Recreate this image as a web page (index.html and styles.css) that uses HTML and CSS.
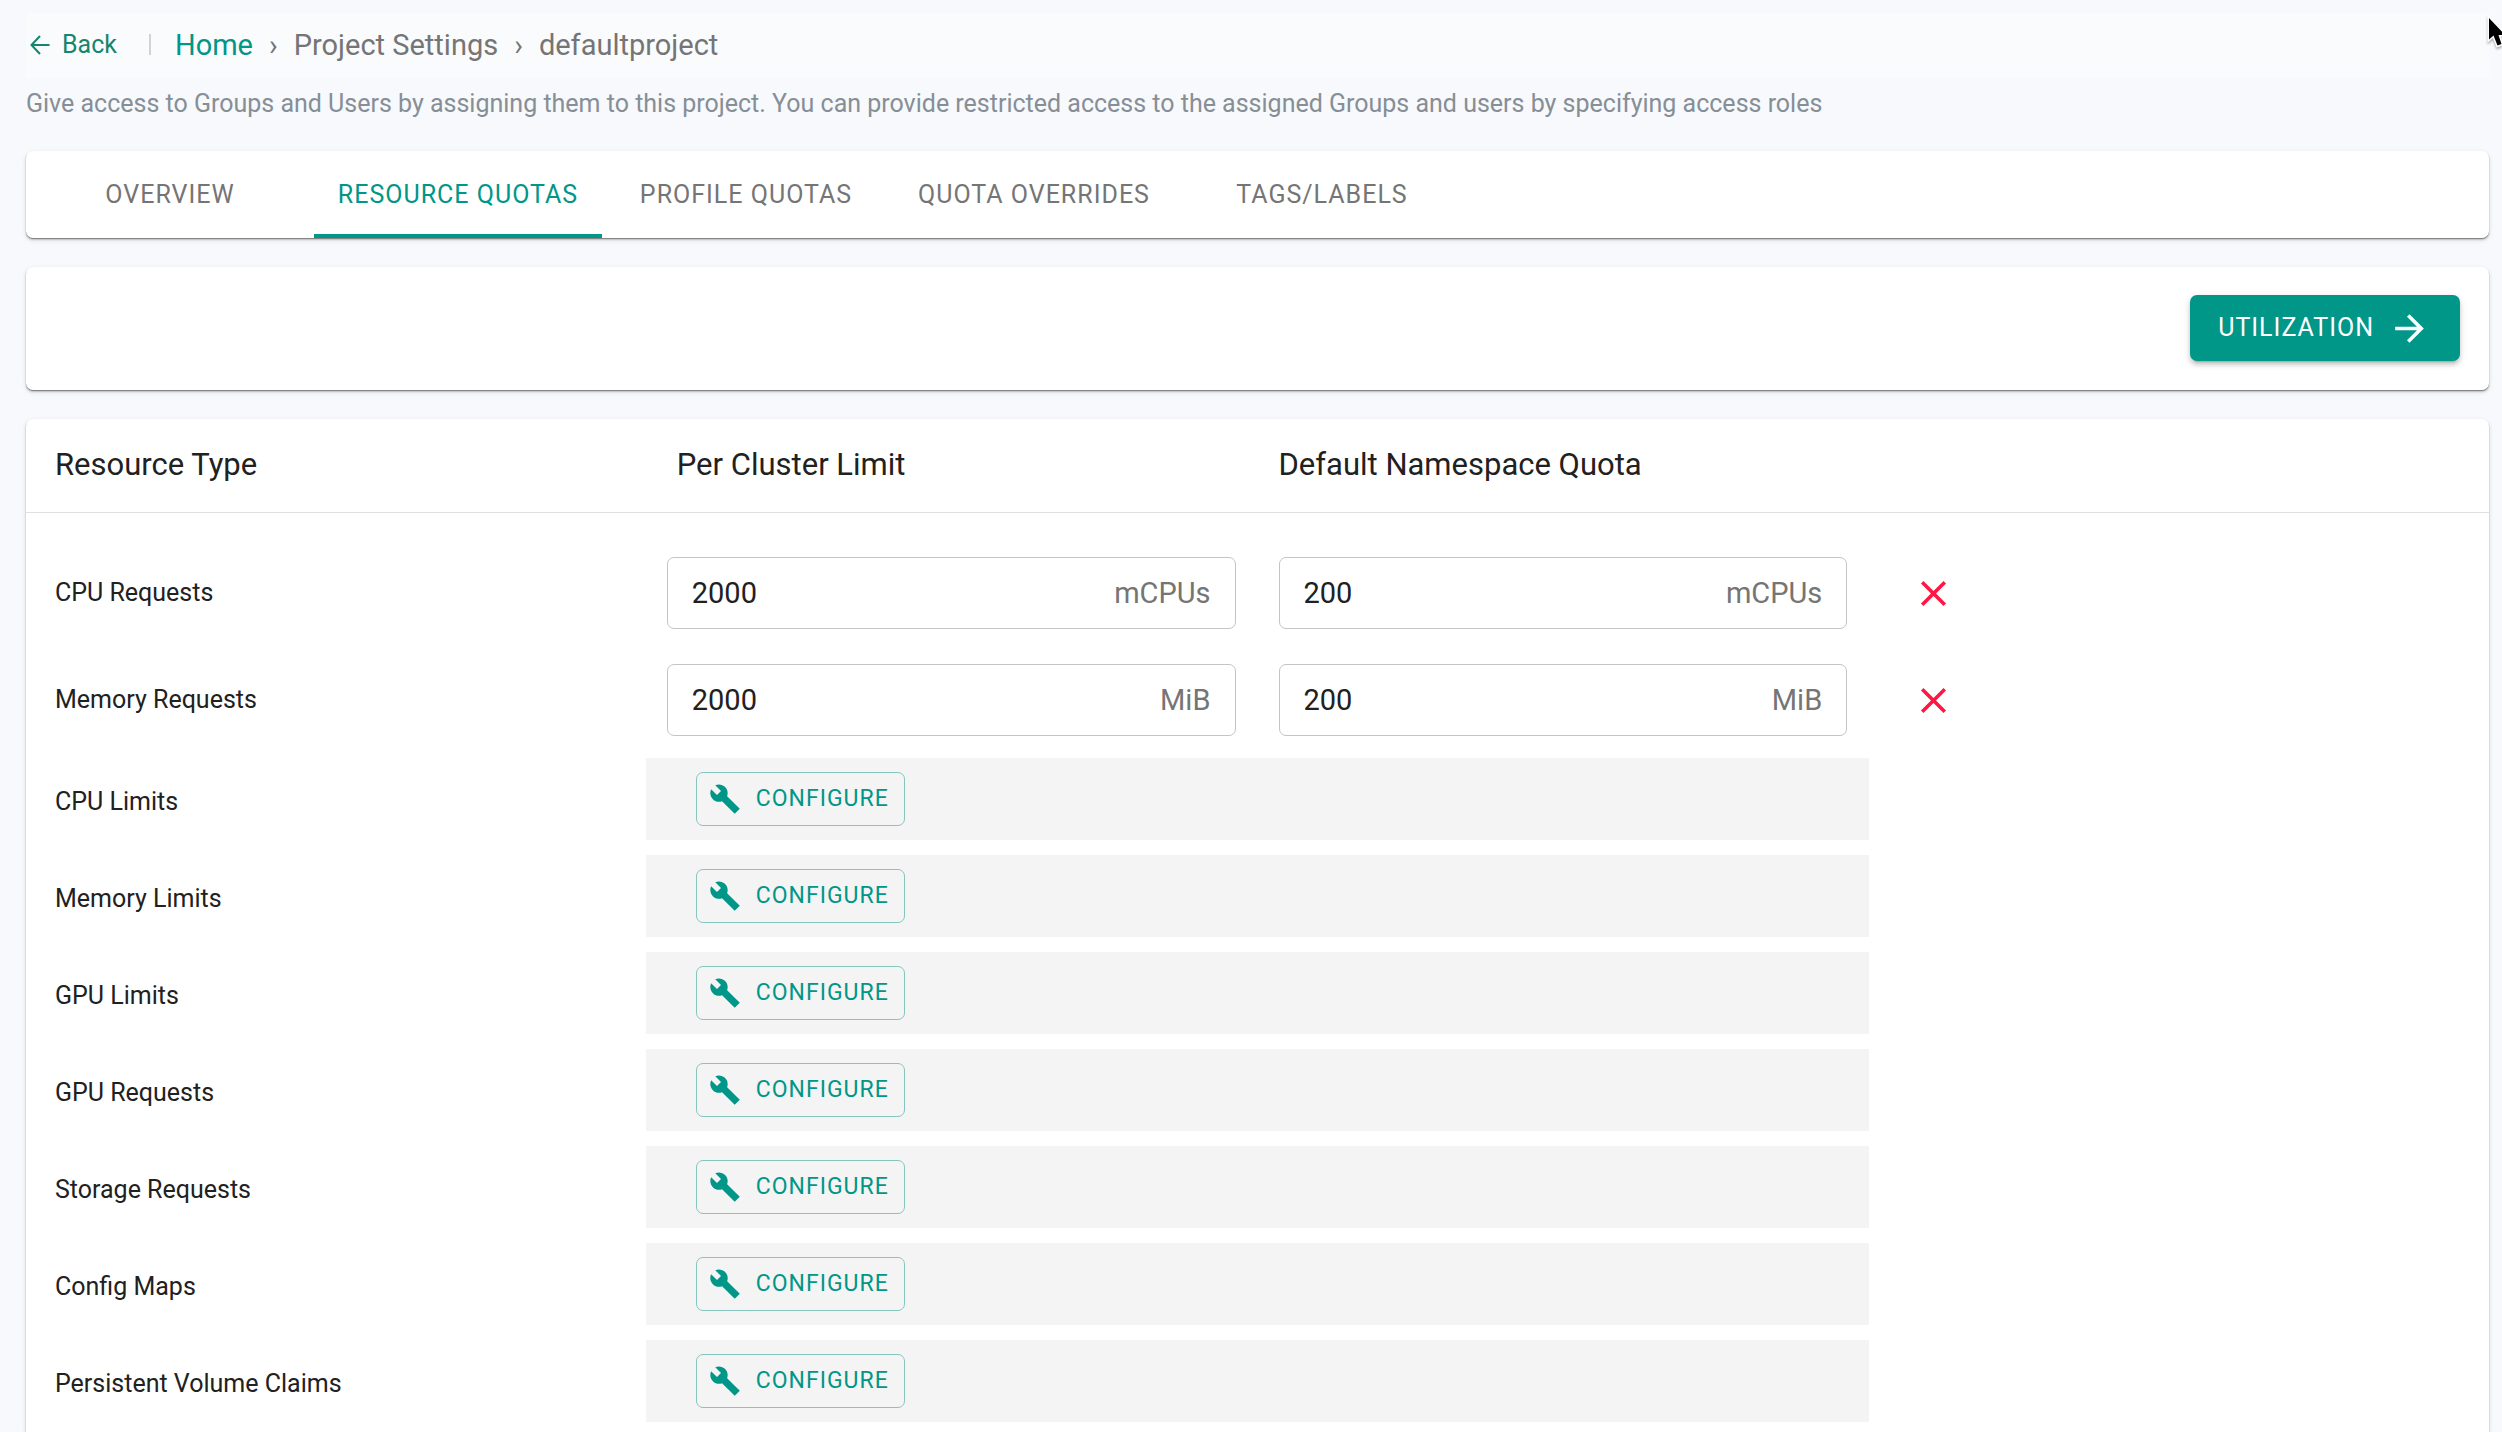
FILE: index.html
```
<!DOCTYPE html>
<html lang="en">
<head>
<meta charset="utf-8">
<title>Project Settings - defaultproject</title>
<link rel="stylesheet" href="styles.css">
</head>
<body>
<svg class="sprite" aria-hidden="true">
  <symbol id="wrench" viewBox="0 0 24 24"><path d="M23.1 19.4L13.6 9.9c.9-2.3.4-5-1.5-6.9-2-2-5-2.4-7.4-1.3L9 6 6 9 1.6 4.7C.4 7.1.9 10.1 2.9 12.1c1.9 1.9 4.6 2.4 6.9 1.5l9.5 9.5z"/></symbol>
  <symbol id="close" viewBox="0 0 24 24"><path d="M19 6.41L17.59 5 12 10.59 6.41 5 5 6.41 10.59 12 5 17.59 6.41 19 12 13.41 17.59 19 19 17.59 13.41 12z"/></symbol>
</svg>

<nav class="breadcrumb" aria-label="Breadcrumb">
  <a class="back" href="#">
    <svg class="back-icon" viewBox="0 0 20 20" aria-hidden="true"><path d="M19.5 10H1.5M10 1L1.5 10l8.5 9"/></svg>
    Back
  </a>
  <span class="divider"></span>
  <a class="home" href="#">Home</a>
  <span>›</span>
  <span>Project Settings</span>
  <span>›</span>
  <span>defaultproject</span>
</nav>
<p class="description">Give access to Groups and Users by assigning them to this project. You can provide restricted access to the assigned Groups and users by specifying access roles</p>

<div class="card tabs" role="tablist">
  <button class="tab" role="tab">OVERVIEW</button>
  <button class="tab active" role="tab" aria-selected="true">RESOURCE QUOTAS</button>
  <button class="tab" role="tab">PROFILE QUOTAS</button>
  <button class="tab" role="tab">QUOTA OVERRIDES</button>
  <button class="tab" role="tab">TAGS/LABELS</button>
</div>

<div class="card toolbar">
  <button class="utilization">UTILIZATION
    <svg class="icon" viewBox="0 0 24 24" aria-hidden="true"><path d="M12 4l-1.41 1.41L16.17 11H4v2h12.17l-5.58 5.59L12 20l8-8z"/></svg>
  </button>
</div>

<main class="card quotas">
  <table>
    <thead>
      <tr><th>Resource Type</th><th class="limit">Per Cluster Limit</th><th>Default Namespace Quota</th></tr>
    </thead>
    <tbody>
      <tr class="set">
        <td class="name">CPU Requests</td>
        <td><label class="field"><input type="text" value="2000" aria-label="CPU requests per cluster limit"><span>mCPUs</span></label></td>
        <td><label class="field"><input type="text" value="200" aria-label="CPU requests default namespace quota"><span>mCPUs</span></label></td>
        <td><button class="remove" aria-label="Remove CPU requests"><svg class="icon"><use href="#close"/></svg></button></td>
      </tr>
      <tr class="set">
        <td class="name">Memory Requests</td>
        <td><label class="field"><input type="text" value="2000" aria-label="Memory requests per cluster limit"><span>MiB</span></label></td>
        <td><label class="field"><input type="text" value="200" aria-label="Memory requests default namespace quota"><span>MiB</span></label></td>
        <td><button class="remove" aria-label="Remove memory requests"><svg class="icon"><use href="#close"/></svg></button></td>
      </tr>
      <tr class="unset"><td class="name">CPU Limits</td><td class="bar" colspan="2"><button class="configure"><svg><use href="#wrench"/></svg>CONFIGURE</button></td></tr>
      <tr class="unset"><td class="name">Memory Limits</td><td class="bar" colspan="2"><button class="configure"><svg><use href="#wrench"/></svg>CONFIGURE</button></td></tr>
      <tr class="unset"><td class="name">GPU Limits</td><td class="bar" colspan="2"><button class="configure"><svg><use href="#wrench"/></svg>CONFIGURE</button></td></tr>
      <tr class="unset"><td class="name">GPU Requests</td><td class="bar" colspan="2"><button class="configure"><svg><use href="#wrench"/></svg>CONFIGURE</button></td></tr>
      <tr class="unset"><td class="name">Storage Requests</td><td class="bar" colspan="2"><button class="configure"><svg><use href="#wrench"/></svg>CONFIGURE</button></td></tr>
      <tr class="unset"><td class="name">Config Maps</td><td class="bar" colspan="2"><button class="configure"><svg><use href="#wrench"/></svg>CONFIGURE</button></td></tr>
      <tr class="unset"><td class="name">Persistent Volume Claims</td><td class="bar" colspan="2"><button class="configure"><svg><use href="#wrench"/></svg>CONFIGURE</button></td></tr>
    </tbody>
  </table>
</main>

<svg class="pointer" viewBox="0 0 16 38" preserveAspectRatio="xMinYMin" aria-hidden="true"><path d="M3 4v21.500l4.500-4 4 10 4-1.500-3-9H19z"/></svg>
</body>
</html>
```
FILE: styles.css
```
* {
  box-sizing: border-box;
}

body {
  display: flex;
  flex-direction: column;
  min-height: 100vh;
  margin: 0;
  padding: 13px 13px 0 26px;
  background: #f7f9fc;
  color: #212121;
  font-family: Roboto, "Liberation Sans", sans-serif;
  font-size: 25px;
  line-height: 30px;
}

button,
input {
  margin: 0;
  padding: 0;
  border: 0;
  background: none;
  color: inherit;
  font: inherit;
}

button {
  cursor: pointer;
}

a {
  text-decoration: none;
}

svg {
  fill: currentColor;
}

.sprite {
  display: none;
}

.icon {
  display: block;
  width: 43px;
  height: 43px;
}

/* Breadcrumb */

.breadcrumb {
  display: flex;
  align-items: center;
  gap: 16px;
  height: 65px;
  padding: 0 4px 2px;
  background: #fafbfd;
  color: #757575;
  font-size: 29px;
}

.back {
  display: flex;
  align-items: center;
  gap: 12px;
  color: #14856f;
  font-size: 25px;
}

.back-icon {
  width: 20px;
  height: 20px;
  fill: none;
  stroke: currentColor;
  stroke-width: 2;
}

.divider {
  width: 2px;
  height: 21px;
  margin: 0 8px 0 16px;
  background: #d2d3d4;
}

.home {
  color: #009688;
}

.description {
  margin: 11px 0 32px;
  color: #868e96;
  font-weight: 450;
}

/* Cards */

.card {
  margin-bottom: 29px;
  border-radius: 7px;
  background: #fff;
  box-shadow: 0 1px 1px rgba(0, 0, 0, 0.36), 0 2px 2px rgba(0, 0, 0, 0.14), 0 2px 5px rgba(0, 0, 0, 0.12);
}

.tabs {
  display: flex;
}

.tab {
  width: 288px;
  height: 87px;
  border-top: 4px solid transparent;
  border-bottom: 4px solid transparent;
  color: #757575;
  letter-spacing: 1px;
}

.tab.active {
  border-bottom-color: #009688;
  color: #009688;
}

.toolbar {
  display: flex;
  justify-content: flex-end;
  padding: 28px 29px 29px;
}

.utilization {
  display: flex;
  align-items: center;
  gap: 14px;
  height: 66px;
  padding: 0 29px 0 28px;
  border-radius: 7px;
  background: #009688;
  box-shadow: 0 5px 2px -4px rgba(0, 0, 0, 0.2), 0 4px 4px rgba(0, 0, 0, 0.14), 0 2px 9px rgba(0, 0, 0, 0.12);
  color: #fff;
  font-weight: 450;
  letter-spacing: 1px;
}

/* Quota table */

.quotas {
  flex: 1;
  margin-bottom: 0;
  border-radius: 7px 7px 0 0;
}

table,
thead,
tbody {
  display: block;
}

tbody {
  padding-top: 23px;
}

tr {
  display: grid;
  grid-template-columns: repeat(4, 1fr);
  align-items: center;
  padding: 0 8px;
}

thead tr {
  height: 94px;
  padding-bottom: 2px;
  border-bottom: 1px solid #e0e0e0;
}

th {
  padding: 0 21px;
  font-size: 31px;
  font-weight: 400;
  text-align: left;
}

th.limit {
  padding-left: 31px;
}

td {
  padding: 0 22px 0 21px;
}

.set {
  height: 107px;
  padding-top: 7px;
}

.unset {
  height: 97px;
}

.unset .name {
  padding-top: 7px;
}

.field {
  display: flex;
  align-items: center;
  height: 72px;
  padding: 0 24px;
  border: 1px solid #c4c4c4;
  border-radius: 7px;
  font-size: 29px;
}

.field input {
  flex: 1;
  min-width: 0;
}

.field span {
  color: #757575;
}

.remove {
  display: block;
  padding: 22px;
  color: #ff1744;
}

.bar {
  grid-column: span 2;
  padding: 14px 50px;
  background: #f4f4f4;
}

.configure {
  display: flex;
  align-items: center;
  gap: 15px;
  height: 54px;
  padding: 0 15px 0 12px;
  border: 1px solid #85c5be;
  border-radius: 7px;
  color: #009688;
  font-size: 23px;
  letter-spacing: 1px;
}

.configure svg {
  width: 32px;
  height: 32px;
}

/* Mouse pointer over the page corner */

.pointer {
  position: absolute;
  top: 14px;
  right: 0;
  width: 16px;
  height: 38px;
  fill: #000;
  stroke: #fff;
  stroke-width: 3;
  paint-order: stroke;
  filter: drop-shadow(0 2px 1px rgba(0, 0, 0, 0.3));
}
```
